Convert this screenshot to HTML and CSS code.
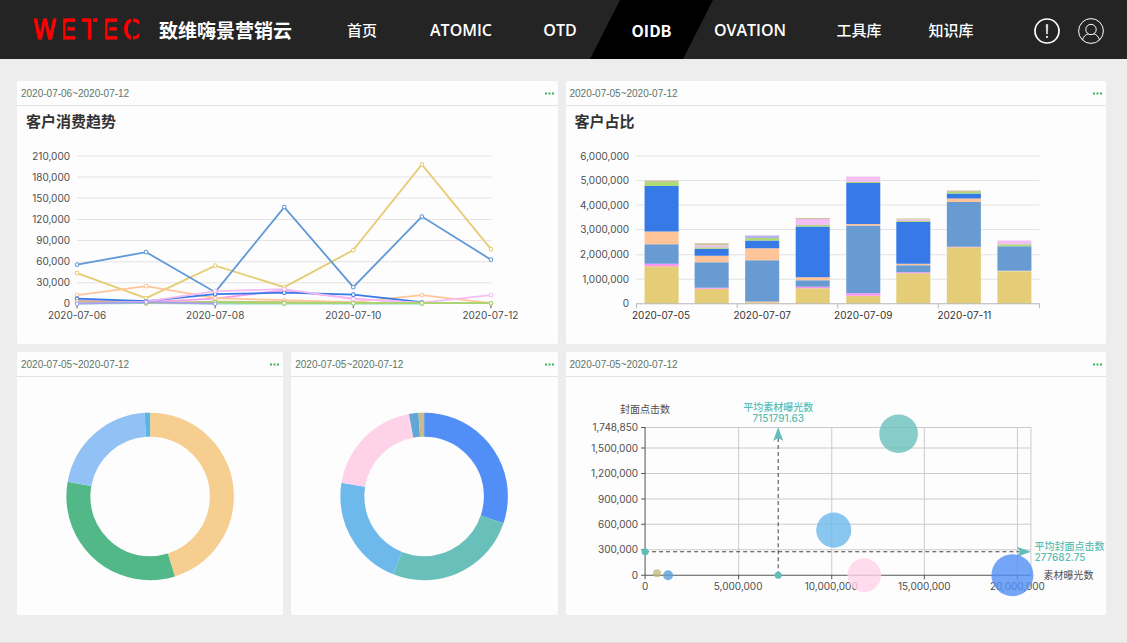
FILE: index.html
```html
<!DOCTYPE html>
<html lang="zh-CN">
<head>
<meta charset="utf-8">
<title>致维嗨景营销云 - OIDB</title>
<meta name="viewport" content="width=device-width, initial-scale=1">
<link rel="stylesheet" href="styles.css">
</head>
<body>
<header class="topbar">
  <svg class="logo" viewBox="0 0 112 32" role="img" aria-label="WETEC">
    <text class="logo-text" y="25" x="1 29 50 71 91">WETEC</text>
    <path class="logo-cut" d="M34.500 9V22M76.500 9V22M60 3V9M100 2V30"/>
  </svg>
  <h1 class="brand">致维嗨景营销云</h1>
  <nav class="nav">
    <a class="nav-item" href="#">首页</a>
    <a class="nav-item nav-latin" href="#">ATOMIC</a>
    <a class="nav-item nav-latin" href="#">OTD</a>
    <a class="nav-item nav-active" href="#" aria-current="page">OIDB</a>
    <a class="nav-item nav-latin" href="#">OVATION</a>
    <a class="nav-item" href="#">工具库</a>
    <a class="nav-item" href="#">知识库</a>
  </nav>
  <div class="actions">
    <button class="icon-button" type="button" aria-label="通知">
      <svg viewBox="0 0 26 26"><circle cx="13" cy="13" r="12" stroke-width="1.7"/><path d="M12.200 6.500h1.600l-.4 9.500h-.8z" fill="#fff" stroke="#fff" stroke-width=".5"/><circle cx="13" cy="19" r="1.100" fill="#fff" stroke="none"/></svg>
    </button>
    <button class="icon-button" type="button" aria-label="用户">
      <svg viewBox="0 0 26 26"><circle cx="13" cy="13" r="12.400"/><circle cx="13" cy="11.500" r="5.200"/><path d="M4.500 22C5.500 18.500 7.500 16.500 10.300 15.800M21.500 22C20.500 18.500 18.500 16.500 15.700 15.800"/></svg>
    </button>
  </div>
</header>

<main class="board">
  <section class="panel panel-wide">
    <header class="panel-head"><span>2020-07-06~2020-07-12</span>
      <button class="more" type="button" aria-label="更多"><svg viewBox="0 0 9 3"><path d="M0 0.500h2v2h-2zM3.500 0.500h2v2h-2zM7 0.500h2v2h-2z"/></svg></button></header>
    <div class="panel-body">
      <h2 class="panel-title">客户消费趋势</h2>
      <svg class="chart" viewBox="17 106 540 238">
        <defs>
          <marker id="dot" markerUnits="userSpaceOnUse" markerWidth="6" markerHeight="6" refX="3" refY="3"><circle cx="3" cy="3" r="1.800" fill="#fff" stroke="context-stroke" stroke-width="1"/></marker>
        </defs>
        <path class="grid" d="M77 156H491M77 177H491M77 198H491M77 219.500H491M77 240.500H491M77 261.500H491M77 282.500H491"/>
        <path class="tick" d="M77 303.500V308M215 303.500V308M353 303.500V308M490.500 303.500V308"/>
        <g class="label end">
          <text x="70" y="160">210,000</text><text x="70" y="181">180,000</text><text x="70" y="202">150,000</text><text x="70" y="223">120,000</text><text x="70" y="244">90,000</text><text x="70" y="265">60,000</text><text x="70" y="286">30,000</text><text x="70" y="307">0</text>
        </g>
        <g class="label mid">
          <text x="77" y="319">2020-07-06</text><text x="215" y="319">2020-07-08</text><text x="353" y="319">2020-07-10</text><text x="490" y="319">2020-07-12</text>
        </g>
        <g class="line">
          <polyline stroke="#e5cd73" points="77,273 146,298 215,265.500 284,287 353,250 421.500,164.500 490.500,249"/>
          <polyline stroke="#fa9af0" points="77,300 146,302 215,298.500 284,290 353,298.500 421.500,303"/>
          <polyline stroke="#5f98d6" points="77,264.500 146,252 215,292 284,207 353,287 421.500,216.500 490.500,259.500"/>
          <polyline stroke="#ffc599" points="77,295 146,286 215,298 284,300 353,302 421.500,295 490.500,303"/>
          <polyline stroke="#367ae8" points="77,298.500 146,301 215,294 284,292.500 353,294.500 421.500,302"/>
          <polyline stroke="#f2bdf4" points="77,302 146,301.500 215,291 284,289 353,299 421.500,302.500 490.500,295"/>
          <polyline stroke="#c9bb82" points="77,301 146,303 215,301.500 284,302 353,303 421.500,303 490.500,303"/>
          <polyline stroke="#90d5c5" points="77,303.500 146,303 215,303.500 284,303.500 353,303.500 421.500,303.500"/>
          <polyline stroke="#a8d66d" points="146,303 215,302 284,303 353,303 421.500,303 490.500,303"/>
          <polyline stroke="#a99df0" points="77,303.500 146,302 215,303.500"/>
        </g>
      </svg>
    </div>
  </section>

  <section class="panel panel-wide">
    <header class="panel-head"><span>2020-07-05~2020-07-12</span>
      <button class="more" type="button" aria-label="更多"><svg viewBox="0 0 9 3"><path d="M0 0.500h2v2h-2zM3.500 0.500h2v2h-2zM7 0.500h2v2h-2z"/></svg></button></header>
    <div class="panel-body">
      <h2 class="panel-title">客户占比</h2>
      <svg class="chart" viewBox="566 106 540 238">
        <path class="grid" d="M636 156H1039M636 180.500H1039M636 205H1039M636 229.500H1039M636 254.500H1039M636 279H1039"/>
        <g class="label end">
          <text x="629" y="160">6,000,000</text><text x="629" y="184">5,000,000</text><text x="629" y="209">4,000,000</text><text x="629" y="233">3,000,000</text><text x="629" y="258">2,000,000</text><text x="629" y="283">1,000,000</text><text x="629" y="307">0</text>
        </g>
        <g class="label dark mid">
          <text x="661" y="319">2020-07-05</text><text x="762" y="319">2020-07-07</text><text x="863" y="319">2020-07-09</text><text x="964" y="319">2020-07-11</text>
        </g>
        <g class="bar">
          <path class="c-yellow" d="M661.500 303.500V266M711.500 303.500V288.500M762 303.500V302M812.500 303.500V288M863 303.500V295.500M913 303.500V273M963.500 303.500V247M1014 303.500V271"/>
          <path class="c-magenta" d="M661.500 266V263.500M711.500 288.500V287.500M812.500 288V286.500M863 295.500V293M913 273V272M963.500 247V246.500"/>
          <path class="c-steel" d="M661.500 263.500V244M711.500 287.500V262M762 301.500V260M812.500 286.500V280M863 293V225.500M913 272V265M963.500 246.500V202M1014 270.500V246"/>
          <path class="c-orange" d="M661.500 244V231.500M711.500 262V255.500M762 260V248M812.500 280V277M863 225.500V224M913 265V263.500M963.500 202V198.500M762 302.500V301.500"/>
          <path class="c-blue" d="M661.500 231.500V186M711.500 255.500V248.500M762 248V240.500M812.500 277V226.500M863 224V183M913 263.500V222M963.500 198.500V193.500"/>
          <path class="c-green" d="M661.500 186V182M711.500 248.500V247M762 240.500V238M812.500 226.500V225M863 183V182M913 222V221M963.500 193.500V192M1014 246V244"/>
          <path class="c-pink" d="M711.500 247V245M812.500 225V219M863 182V176.500M913 221V219.500M1014 244V240.500"/>
          <path class="c-khaki" d="M661.500 182V180.500M711.500 245V243M812.500 219V218M913 219.500V218.500M963.500 192V190.500"/>
          <path class="c-violet" d="M762 238V235.500"/>
        </g>
        <path class="axis" d="M636.500 308V303.500H1039V308M737 303.500V308M837.500 303.500V308M938 303.500V308"/>
      </svg>
    </div>
  </section>

  <section class="panel">
    <header class="panel-head"><span>2020-07-05~2020-07-12</span>
      <button class="more" type="button" aria-label="更多"><svg viewBox="0 0 9 3"><path d="M0 0.500h2v2h-2zM3.500 0.500h2v2h-2zM7 0.500h2v2h-2z"/></svg></button></header>
    <div class="panel-body">
      <svg class="chart" viewBox="0 0 266 238">
        <g class="ring" transform="rotate(-90 133 119.300)">
          <circle cx="133" cy="119.300" r="71.700" pathLength="100" stroke="#f5ce90" stroke-dasharray="45.200 100"/>
          <circle cx="133" cy="119.300" r="71.700" pathLength="100" stroke="#52b887" stroke-dasharray="32.600 100" stroke-dashoffset="-45.200"/>
          <circle cx="133" cy="119.300" r="71.700" pathLength="100" stroke="#92c1f6" stroke-dasharray="21.100 100" stroke-dashoffset="-77.800"/>
          <circle cx="133" cy="119.300" r="71.700" pathLength="100" stroke="#5bb5e2" stroke-dasharray="1.100 100" stroke-dashoffset="-98.900"/>
        </g>
      </svg>
    </div>
  </section>

  <section class="panel">
    <header class="panel-head"><span>2020-07-05~2020-07-12</span>
      <button class="more" type="button" aria-label="更多"><svg viewBox="0 0 9 3"><path d="M0 0.500h2v2h-2zM3.500 0.500h2v2h-2zM7 0.500h2v2h-2z"/></svg></button></header>
    <div class="panel-body">
      <svg class="chart" viewBox="0 0 266 238">
        <g class="ring" transform="rotate(-90 133 119.300)">
          <circle cx="133" cy="119.300" r="71.700" pathLength="100" stroke="#518ef5" stroke-dasharray="30.200 100"/>
          <circle cx="133" cy="119.300" r="71.700" pathLength="100" stroke="#69bfba" stroke-dasharray="25.800 100" stroke-dashoffset="-30.200"/>
          <circle cx="133" cy="119.300" r="71.700" pathLength="100" stroke="#6db9ec" stroke-dasharray="21.600 100" stroke-dashoffset="-56"/>
          <circle cx="133" cy="119.300" r="71.700" pathLength="100" stroke="#fed3e9" stroke-dasharray="19.500 100" stroke-dashoffset="-77.600"/>
          <circle cx="133" cy="119.300" r="71.700" pathLength="100" stroke="#62a6d6" stroke-dasharray="1.800 100" stroke-dashoffset="-97.100"/>
          <circle cx="133" cy="119.300" r="71.700" pathLength="100" stroke="#c9bc89" stroke-dasharray="1.100 100" stroke-dashoffset="-98.900"/>
        </g>
      </svg>
    </div>
  </section>

  <section class="panel panel-wide">
    <header class="panel-head"><span>2020-07-05~2020-07-12</span>
      <button class="more" type="button" aria-label="更多"><svg viewBox="0 0 9 3"><path d="M0 0.500h2v2h-2zM3.500 0.500h2v2h-2zM7 0.500h2v2h-2z"/></svg></button></header>
    <div class="panel-body">
      <svg class="chart" viewBox="566 377 540 238">
        <path class="grid-strong" d="M645 427.500H1030.500V575M645 448H1030M645 473.500H1030M645 499H1030M645 524H1030M645 549.500H1030M738.500 427V575M831.500 427V575M924 427V575M1017 427V575"/>
        <path class="axis-dark" d="M645 427V579M641 575H1030.500M641 427.500H645M641 448H645M641 473.500H645M641 499H645M641 524H645M641 549.500H645M738.500 575V579M831.500 575V579M924 575V579M1017 575V579"/>
        <g class="label end">
          <text x="638" y="431">1,748,850</text><text x="638" y="452">1,500,000</text><text x="638" y="477">1,200,000</text><text x="638" y="503">900,000</text><text x="638" y="528">600,000</text><text x="638" y="553">300,000</text><text x="638" y="579">0</text>
        </g>
        <g class="label mid">
          <text x="645" y="590">0</text><text x="738" y="590">5,000,000</text><text x="831" y="590">10,000,000</text><text x="924" y="590">15,000,000</text><text x="1017" y="590">20,000,000</text>
          <text x="645" y="413">封面点击数</text>
        </g>
        <text class="label" x="1043" y="579">素材曝光数</text>
        <path class="average" d="M778 575V438M645 551.500H1019"/>
        <g class="mark">
          <circle cx="645" cy="551.500" r="3.500"/><circle cx="778" cy="575" r="3.500"/>
          <path d="M778 427L783 441L778 438L773 441ZM1030.500 551.500L1016.500 546.500L1019.500 551.500L1016.500 556.500Z"/>
        </g>
        <g class="mark-label mid"><text x="778" y="411">平均素材曝光数</text><text x="778" y="422">7151791.63</text></g>
        <g class="mark-label"><text x="1034" y="550">平均封面点击数</text><text x="1034" y="561">277682.75</text></g>
        <g class="bubble">
          <circle cx="898.300" cy="433.700" r="19.300" fill="#69bfba"/>
          <circle cx="833.500" cy="530" r="17.500" fill="#6db9ec"/>
          <circle cx="864" cy="575" r="16.800" fill="#fed3e9"/>
          <circle cx="1012" cy="575" r="21" fill="#518ef5"/>
          <circle cx="657" cy="573" r="4" fill="#c2ba80"/>
          <circle cx="668" cy="575" r="5" fill="#57a0da"/>
        </g>
      </svg>
    </div>
  </section>
</main>
</body>
</html>
```
FILE: styles.css
```css
* { box-sizing: border-box; }

body {
  min-height: 100vh;
  margin: 0;
  background: #ededed;
  border-bottom: 1px solid #e0e0e0;
  font-family: "Liberation Sans", "Noto Sans CJK SC", sans-serif;
}

button { padding: 0; border: 0; background: none; cursor: pointer; }

/* Top bar */
.topbar {
  display: flex;
  align-items: center;
  height: 59px;
  padding: 0 23px 0 32px;
  background: #242424;
  color: #fff;
}
.logo { flex: none; width: 112px; height: 32px; overflow: visible; }
.logo-text {
  font-family: "Liberation Sans Narrow", "DejaVu Sans Condensed", sans-serif;
  font-size: 26px;
  fill: #f00;
  stroke: #f00;
  stroke-width: 1;
}
.logo-cut { fill: none; stroke: #242424; stroke-width: 2; }
.brand {
  flex: none;
  margin: 0 0 0 15px;
  font: 700 19px/28px "Noto Sans CJK SC", sans-serif;
}
.nav {
  display: grid;
  grid-template-columns: 90px 108px 90px 93px 104px 114px 70px;
  align-self: stretch;
  margin-left: 25px;
}
.nav-item {
  position: relative;
  display: flex;
  align-items: center;
  justify-content: center;
  padding-top: 1px;
  color: #fff;
  text-decoration: none;
  font: 500 15px/24px "Noto Sans CJK SC", sans-serif;
}
.nav-latin { font: 600 16px/24px "Open Sans", "Noto Sans CJK SC", sans-serif; }
.nav-active { z-index: 1; padding-top: 0; font-size: 16px; font-weight: 700; }
.nav-active::before {
  content: "";
  position: absolute;
  z-index: -1;
  inset: 0 -15px;
  background: #000;
  clip-path: polygon(30px 0, 100% 0, calc(100% - 30px) 100%, 0 100%);
}
.actions { display: flex; gap: 18px; margin-left: auto; padding-top: 2px; }
.icon-button { width: 26px; height: 26px; }
.icon-button svg {
  display: block;
  overflow: visible;
  fill: none;
  stroke: #fff;
  stroke-width: 1;
}

/* Dashboard */
.board {
  display: grid;
  grid-template-columns: repeat(4, minmax(0, 1fr));
  gap: 8px;
  padding: 22px 21px 27px 17px;
}
.panel { background: #fdfdfd; border-radius: 2px; }
.panel-wide { grid-column: span 2; }
.panel-head {
  display: flex;
  align-items: center;
  justify-content: space-between;
  height: 25px;
  padding: 0 4px;
  border-bottom: 1px solid #e2e2e2;
  color: #5c7567;
  font-size: 10px;
}
.more { width: 9px; height: 9px; }
.more svg { display: block; width: 9px; height: 3px; margin: auto; fill: #35b558; }
.panel-body { position: relative; }
.panel-title {
  position: absolute;
  top: 4px;
  left: 9px;
  margin: 0;
  color: #333;
  font: 700 15px/22px "Noto Sans CJK SC", sans-serif;
}

/* Charts */
.chart { display: block; width: 100%; height: auto; }
.grid { fill: none; stroke: #e4e4e4; }
.grid-strong { fill: none; stroke: #ccc; }
.tick { stroke: #555; }
.axis { fill: none; stroke: #b8b8b8; }
.axis-dark { fill: none; stroke: #555; }
.label, .mark-label { font: 10px Inter, "Noto Sans CJK SC", sans-serif; fill: #4d4d4d; }
.dark { fill: #333; }
.mark-label { fill: #5bbdb5; font-weight: 500; }
.end { text-anchor: end; }
.mid { text-anchor: middle; }
.line { fill: none; stroke-width: 1.8; }
.line polyline { marker: url(#dot); }
.bar { fill: none; stroke-width: 34; }
.c-yellow { stroke: #e5cd77; }
.c-magenta { stroke: #fa94f2; }
.c-steel { stroke: #699bd3; }
.c-orange { stroke: #ffc599; }
.c-blue { stroke: #367ae8; }
.c-green { stroke: #b0d977; }
.c-pink { stroke: #f2bef4; }
.c-khaki { stroke: #ccc49a; }
.c-violet { stroke: #bbb0ef; }
.ring { fill: none; stroke-width: 24; }
.average { fill: none; stroke: #444; stroke-dasharray: 4 3; }
.mark { fill: #5fbfb8; }
.bubble { fill-opacity: .8; }
```
